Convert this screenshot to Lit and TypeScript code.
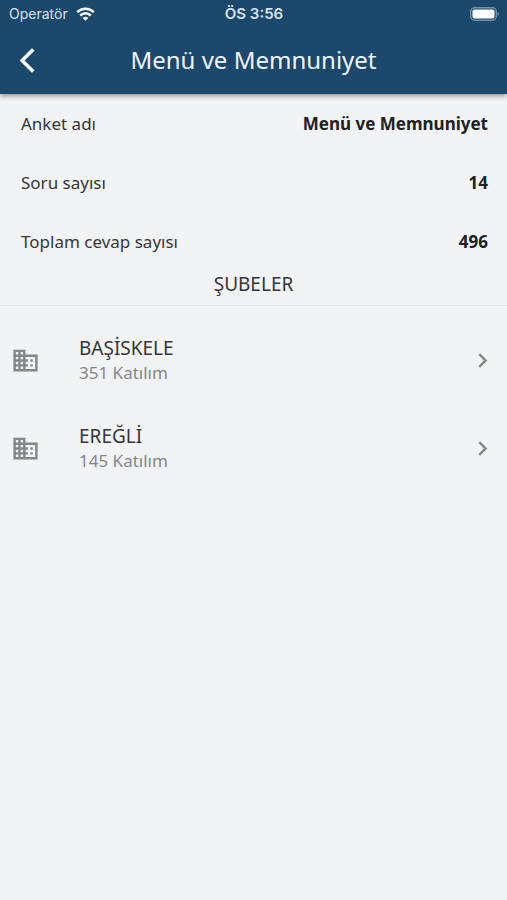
import { LitElement, html, css, svg } from "lit";
import { customElement } from "lit/decorators.js";

interface Branch {
  name: string;
  count: number;
}

@customElement("app-root")
export class AppRoot extends LitElement {
  static styles = css`
    :host {
      display: block;
      min-height: 100vh;
      background: #f1f3f5;
      color: #353637;
      font-family: "Noto Sans", "Open Sans", sans-serif;
      font-size: 17px;
      line-height: 24px;
    }
    header {
      position: relative;
      background: #1c486b;
      color: #fff;
      box-shadow: 0 2px 5px rgba(0, 0, 0, 0.4);
    }
    .status {
      display: grid;
      grid-template-columns: 1fr auto 1fr;
      align-items: center;
      height: 26px;
      padding: 0 8px 0 9px;
      font: 14px/28px Inter, "Liberation Sans", sans-serif;
      color: #d5e2ee;
    }
    .carrier {
      display: flex;
      align-items: center;
      gap: 8px;
    }
    .time {
      font-size: 15px;
      font-weight: 600;
    }
    .battery {
      justify-self: end;
    }
    svg {
      display: block;
      fill: currentColor;
    }
    .wifi {
      color: #fff;
    }
    .bar {
      display: grid;
      grid-template-columns: 48px 1fr 48px;
      align-items: center;
      height: 68px;
    }
    button {
      border: 0;
      background: none;
      color: inherit;
      font: inherit;
      text-align: left;
      cursor: pointer;
    }
    .back {
      height: 48px;
      padding: 0 0 0 20px;
    }
    h1 {
      margin: 0;
      text-align: center;
      font-size: 24px;
      font-weight: 400;
      line-height: 32px;
      color: #eef5fc;
    }
    dl {
      margin: 0;
    }
    .fact {
      display: flex;
      justify-content: space-between;
      align-items: center;
      min-height: 59px;
      padding: 0 19px 0 21px;
    }
    dd {
      margin: 0;
      font-weight: 700;
      color: #202122;
    }
    h2 {
      margin: 0;
      padding-bottom: 8px;
      border-bottom: 1px solid #e3e5e7;
      text-align: center;
      font-size: 19px;
      font-weight: 400;
      line-height: 26px;
    }
    ul {
      margin: 0;
      padding: 10px 0;
      list-style: none;
    }
    .branch {
      display: flex;
      align-items: center;
      width: 100%;
      min-height: 88px;
      padding: 0 10px 0 11px;
    }
    .label {
      flex: 1;
      display: flex;
      flex-direction: column;
      padding-left: 39px;
    }
    .name {
      font-size: 19px;
      line-height: 26px;
    }
    .count,
    .icon {
      color: #858688;
    }
  `;

  private facts: [string, string][] = [
    ["Anket adı", "Menü ve Memnuniyet"],
    ["Soru sayısı", "14"],
    ["Toplam cevap sayısı", "496"],
  ];

  private branches: Branch[] = [
    { name: "BAŞİSKELE", count: 351 },
    { name: "EREĞLİ", count: 145 },
  ];

  private icon(path: string) {
    return html`<svg class="icon" width="29" height="29" viewBox="0 0 24 24" aria-hidden="true">
      ${svg`<path d=${path}></path>`}
    </svg>`;
  }

  render() {
    return html`
      <header>
        <div class="status">
          <div class="carrier">
            <span>Operatör</span>
            <svg class="wifi" width="19" height="14" viewBox="0 0 19 14" aria-hidden="true">
              <path d="M9.500 13.800L6.700 11A4 4 0 0 1 12.300 11Z" />
              <path d="M4.200 8.500A7.500 7.500 0 0 1 14.800 8.500M1.200 5.200A11.700 11.700 0 0 1 17.800 5.200" fill="none" stroke="currentColor" stroke-width="2.500" />
            </svg>
          </div>
          <span class="time">ÖS 3:56</span>
          <svg class="battery" width="29" height="14" viewBox="0 0 29 14" aria-hidden="true">
            <rect x="0.700" y="0.700" width="25.600" height="12.600" rx="4" fill="none" stroke="#7291ab" stroke-width="1.400" />
            <rect x="2.500" y="2.500" width="22" height="9" rx="2" fill="#fff" />
            <path d="M27.500 4.500Q30 7 27.500 9.500Z" fill="#7291ab" />
          </svg>
        </div>
        <div class="bar">
          <button class="back" aria-label="Geri">
            <svg width="29" height="29" viewBox="0 0 24 24" aria-hidden="true">
              <path d="M11.670 3.870L9.900 2.100 0 12l9.900 9.900 1.770-1.770L3.540 12z" stroke="currentColor" stroke-width="0.500" />
            </svg>
          </button>
          <h1>Menü ve Memnuniyet</h1>
        </div>
      </header>
      <main>
        <dl>
          ${this.facts.map(
            ([term, value]) => html`<div class="fact"><dt>${term}</dt><dd>${value}</dd></div>`
          )}
        </dl>
        <h2>ŞUBELER</h2>
        <ul>
          ${this.branches.map(
            (b) => html`<li>
              <button class="branch">
                ${this.icon(
                  "M12 7V3H2v18h20V7H12zM6 19H4v-2h2v2zm0-4H4v-2h2v2zm0-4H4V9h2v2zm0-4H4V5h2v2zm4 12H8v-2h2v2zm0-4H8v-2h2v2zm0-4H8V9h2v2zm0-4H8V5h2v2zm10 12h-8v-2h2v-2h-2v-2h2v-2h-2V9h8v10zm-2-8h-2v2h2v-2zm0 4h-2v2h2v-2z"
                )}
                <span class="label">
                  <span class="name">${b.name}</span>
                  <span class="count">${b.count} Katılım</span>
                </span>
                ${this.icon("M10 6L8.590 7.410 13.170 12l-4.580 4.590L10 18l6-6z")}
              </button>
            </li>`
          )}
        </ul>
      </main>
    `;
  }
}
